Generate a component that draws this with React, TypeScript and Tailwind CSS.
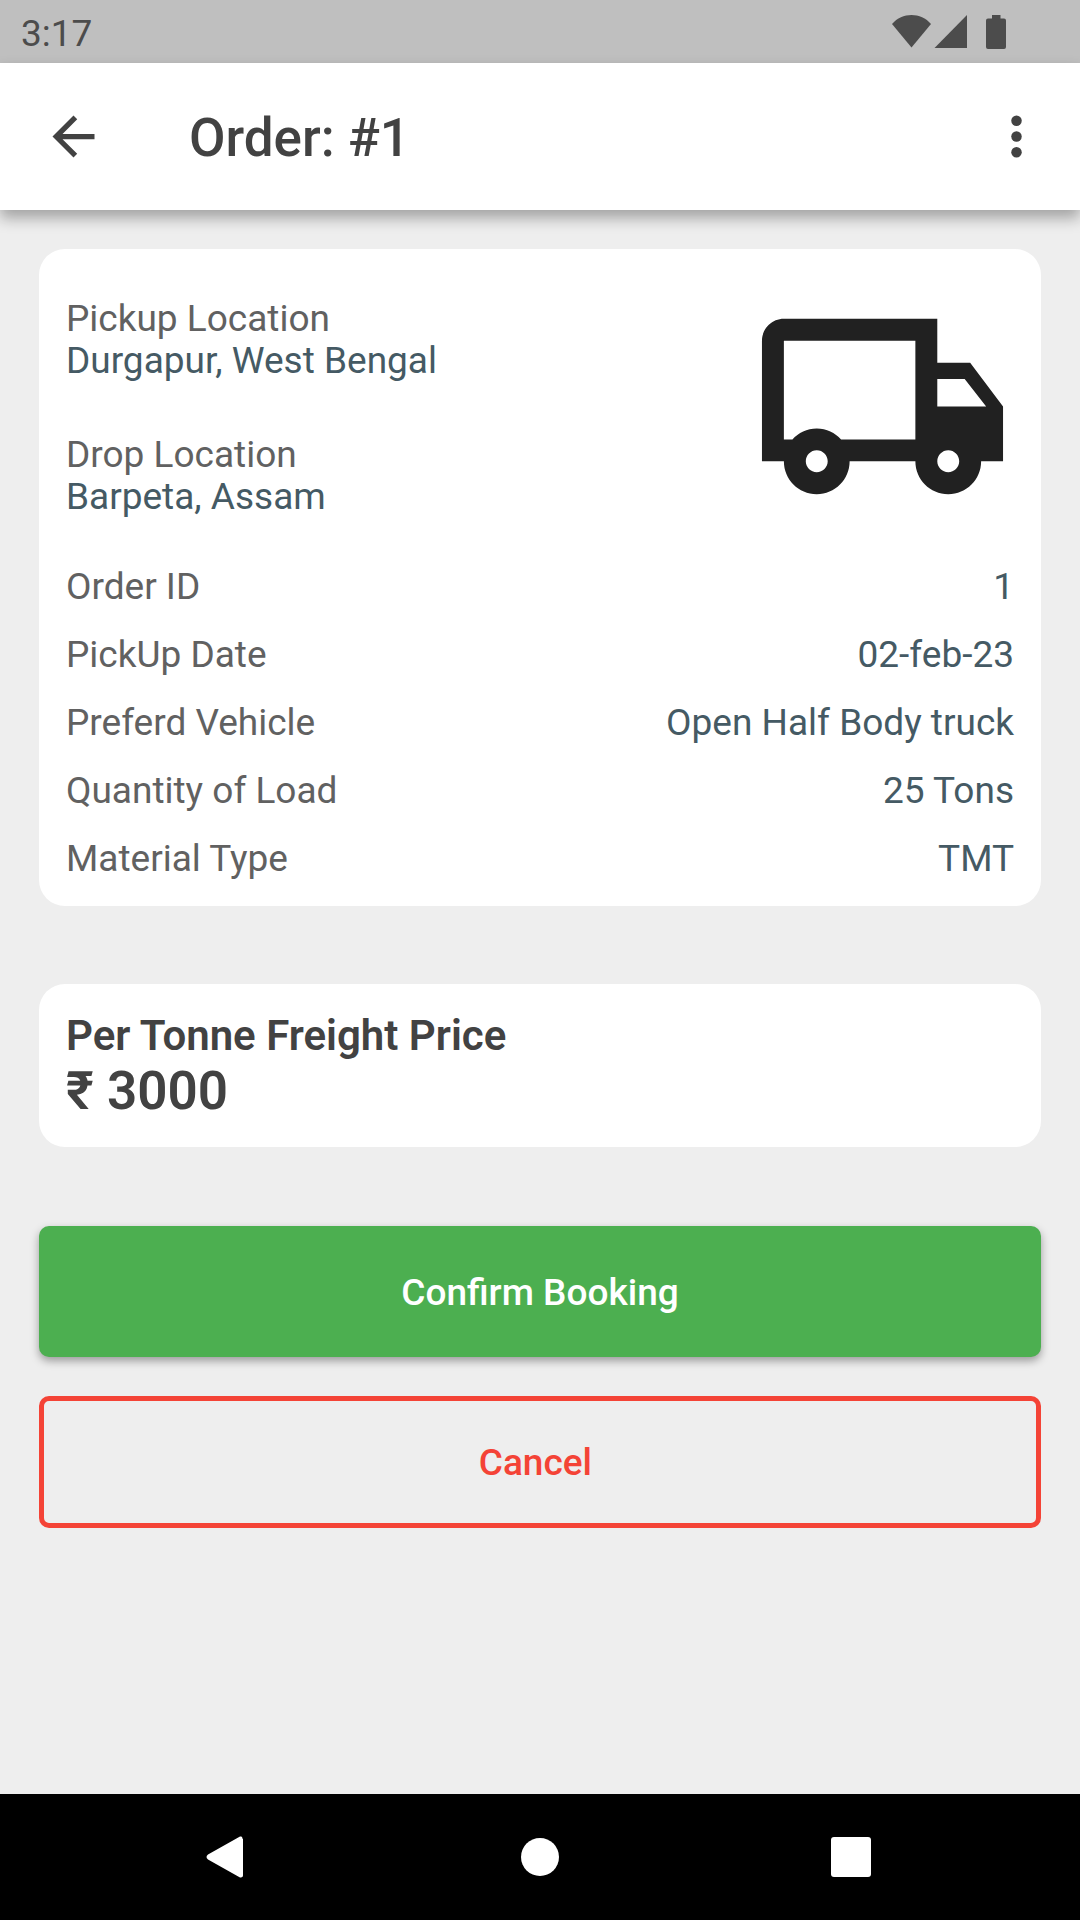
import React from "react";

const details = [
  { label: "Order ID", value: "1" },
  { label: "PickUp Date", value: "02-feb-23" },
  { label: "Preferd Vehicle", value: "Open Half Body truck" },
  { label: "Quantity of Load", value: "25 Tons" },
  { label: "Material Type", value: "TMT" },
];

function StatusBar() {
  return (
    <div className="flex h-[63px] items-center justify-between bg-[#bfbfbf] pl-[21px] pr-[74px] text-[#4c4c4c]">
      <span className="text-[37px] leading-[42px] pt-1">3:17</span>
      <svg className="h-[34px] w-[114px]" viewBox="0 0 114 34" fill="currentColor" aria-hidden="true">
        <path d="M0 9C10-3 29-3 39 9L19.5 32.500Z" />
        <path d="M42.500 33H75V0Z" />
        <path d="M100 0h8.500v3.500h3.500a2 2 0 0 1 2 2V32a2 2 0 0 1-2 2H96a2 2 0 0 1-2-2V5.500a2 2 0 0 1 2-2h4Z" />
      </svg>
    </div>
  );
}

function AppBar() {
  return (
    <header className="relative flex h-[147px] items-center bg-white pl-[42px] pr-8 text-[#424242] shadow-[0_8px_14px_rgba(0,0,0,0.32)]">
      <button type="button" aria-label="Back" className="shrink-0">
        <svg className="size-[63px]" viewBox="0 0 24 24" fill="currentColor">
          <path d="M20 11H7.830l5.590-5.590L12 4l-8 8 8 8 1.410-1.410L7.830 13H20v-2z" />
        </svg>
      </button>
      <h1 className="ml-[84px] flex-1 pt-[3px] text-[53px] leading-[62px] font-medium">Order: #1</h1>
      <button type="button" aria-label="More options" className="shrink-0">
        <svg className="size-[63px]" viewBox="0 0 24 24" fill="currentColor">
          <circle cx="12" cy="6" r="2" />
          <circle cx="12" cy="12" r="2" />
          <circle cx="12" cy="18" r="2" />
        </svg>
      </button>
    </header>
  );
}

function TruckIcon() {
  return (
    <svg className="size-[263px] shrink-0 text-[#212121]" viewBox="0 0 24 24" fill="currentColor" aria-hidden="true">
      <path d="M20 8h-3V4H3c-1.100 0-2 .9-2 2v11h2c0 1.660 1.340 3 3 3s3-1.340 3-3h6c0 1.660 1.340 3 3 3s3-1.340 3-3h2v-5l-3-4zm-.5 1.500l1.960 2.500H17V9.500h2.500zM6 18c-.55 0-1-.45-1-1s.45-1 1-1 1 .45 1 1-.45 1-1 1zm2.220-3c-.55-.61-1.330-1-2.220-1s-1.670.39-2.220 1H3V6h12v9H8.220zM18 18c-.55 0-1-.45-1-1s.45-1 1-1 1 .45 1 1-.45 1-1 1z" />
    </svg>
  );
}

function Location({ label, place }: { label: string; place: string }) {
  return (
    <div>
      <p className="text-[#616161]">{label}</p>
      <p className="text-[#455a64]">{place}</p>
    </div>
  );
}

function NavBar() {
  return (
    <nav className="grid h-[126px] grid-cols-3 place-items-center bg-black px-[72px] text-white">
      <button type="button" aria-label="Back">
        <svg className="size-12" viewBox="0 0 48 48" fill="currentColor">
          <path d="M38 5.500Q39 3 36 3.500L4 21.500Q1 24 4 26.500L36 44.500Q39 45 39 42.500V5.500Z" />
        </svg>
      </button>
      <button type="button" aria-label="Home">
        <svg className="size-12" viewBox="0 0 48 48" fill="currentColor">
          <circle cx="24" cy="24" r="19" />
        </svg>
      </button>
      <button type="button" aria-label="Recent apps">
        <svg className="size-12" viewBox="0 0 48 48" fill="currentColor">
          <rect x="3" y="4" width="40" height="40" rx="3" />
        </svg>
      </button>
    </nav>
  );
}

export default function App() {
  return (
    <div className="flex min-h-screen flex-col bg-[#eeeeee] font-['Roboto',sans-serif]">
      <StatusBar />
      <AppBar />
      <main className="flex flex-1 flex-col px-[39px] pt-[39px] text-[37px] leading-[42px]">
        <section className="rounded-[26px] bg-white px-[27px] pt-[26px] pb-[13px]">
          <div className="mb-[15px] flex items-center justify-between">
            <div className="flex flex-col gap-[52px] pt-[2px]">
              <Location label="Pickup Location" place="Durgapur, West Bengal" />
              <Location label="Drop Location" place="Barpeta, Assam" />
            </div>
            <TruckIcon />
          </div>
          <dl>
            {details.map((d) => (
              <div key={d.label} className="flex justify-between py-[13px]">
                <dt className="text-[#616161]">{d.label}</dt>
                <dd className="text-[#455a64]">{d.value}</dd>
              </div>
            ))}
          </dl>
        </section>
        <section className="mt-[78px] rounded-[26px] bg-white px-[27px] pt-[27px] pb-[25px] text-[#424242]">
          <h2 className="text-[42px] leading-[50px] font-semibold">Per Tonne Freight Price</h2>
          <p className="text-[53px] leading-[61px] font-semibold">₹ 3000</p>
        </section>
        <button
          type="button"
          className="mt-[79px] h-[131px] rounded-[10px] bg-[#4caf50] pt-[2px] font-medium whitespace-pre text-white shadow-[0_4px_8px_rgba(0,0,0,0.35)]"
        >
          Confirm Booking
        </button>
        <button
          type="button"
          className="mt-[39px] h-[132px] rounded-[10px] border-[5px] border-[#f44336] pt-[2px] font-medium whitespace-pre text-[#f44336]"
        >
          {"Cancel "}
        </button>
      </main>
      <NavBar />
    </div>
  );
}
